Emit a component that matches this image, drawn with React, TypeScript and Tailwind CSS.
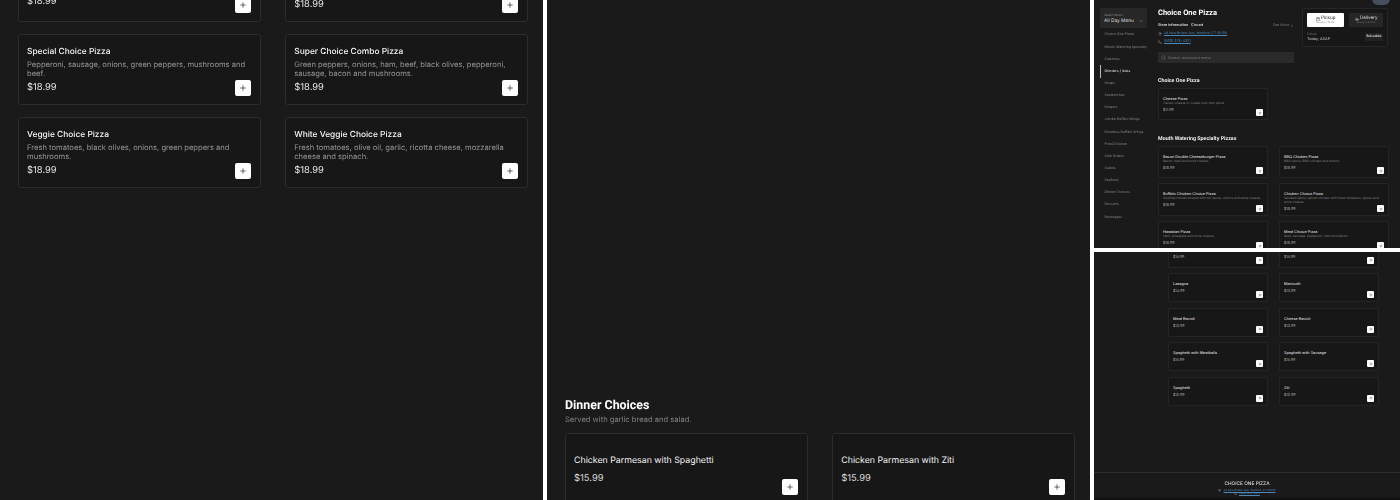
import { Plus, Search, MapPin, Phone, ChevronDown, ShoppingBag, Car } from "lucide-react";

const sans = "font-['Inter','Liberation_Sans',sans-serif]";

function AddBtn({ big }: { big?: boolean }) {
  return (
    <span className={big
      ? "absolute right-[9px] bottom-[8px] flex h-4 w-4 items-center justify-center rounded-[2px] bg-white text-[#222]"
      : "absolute right-[4px] bottom-[3px] flex h-[7px] w-[7px] items-center justify-center rounded-[1px] bg-white text-[#222]"}>
      <Plus size={big ? 8 : 4} strokeWidth={2} />
    </span>
  );
}

function BigCard({ title, desc, price, loose }: { title: string; desc: string; price: string; loose?: boolean }) {
  return (
    <div className="relative h-[71px] rounded-[3px] border border-[#2c2c2c] bg-[#171717] px-2 pt-[11px]">
      <div className="text-[8.4px] leading-[13px] font-medium text-[#f5f5f5]">{title}</div>
      <div className="mt-[1px] text-[7.6px] leading-[9px] text-[#949494]">{desc}</div>
      <div className={`${loose ? "mt-[9.5px]" : "mt-[3.5px]"} text-[9.4px] leading-[11px] text-[#e6e6e6]`}>{price}</div>
      <AddBtn big />
    </div>
  );
}

function DinnerCard({ title, price }: { title: string; price: string }) {
  return (
    <div className="relative h-[80px] rounded-[3px] border border-[#2c2c2c] bg-[#171717] px-2 pt-[20px]">
      <div className="text-[8.8px] leading-[13px] text-[#f2f2f2]">{title}</div>
      <div className="mt-[5px] text-[9.4px] leading-[13px] text-[#d8d8d8]">{price}</div>
      <span className="absolute right-[9px] top-[45px] flex h-4 w-4 items-center justify-center rounded-[2px] bg-white text-[#222]">
        <Plus size={8} strokeWidth={2} />
      </span>
    </div>
  );
}

function MiniCard({ title, desc, price, h }: { title: string; desc?: string; price: string; h: string }) {
  return (
    <div className={`relative rounded-[1px] border border-[#242424] bg-[#171717] px-[4px] pt-[7px] ${h}`}>
      <div className="text-[3.8px] leading-[5px] text-[#ededed]">{title}</div>
      {desc && <div className="text-[3.2px] leading-[4px] text-[#808080]">{desc}</div>}
      <div className="mt-[3px] text-[3.6px] leading-[5px] text-[#bbb]">{price}</div>
      <AddBtn />
    </div>
  );
}

const cats = ["Choice One Pizza", "Mouth Watering Specialty", "Calzones", "Grinders / Subs", "Wraps", "Sandwiches", "Burgers", "Jumbo Buffalo Wings", "Boneless Buffalo Wings", "Fried Chicken", "Side Orders", "Salads", "Seafood", "Dinner Choices", "Desserts", "Beverages"];

function LeftPanel() {
  return (
    <section className="h-full w-[543px] shrink-0 overflow-hidden bg-[#1a1a1a]">
      <div className="-mt-[49px] grid w-[528px] grid-cols-2 gap-x-[24.5px] gap-y-[12px] pl-[18px] blur-[0.3px]">
        <BigCard loose title="Philly Choice Pizza" desc="Steak, onions, green peppers, mushrooms and extra cheese." price="$18.99" />
        <BigCard title="Seafood Choice Pizza" desc="Shrimp, crab meat, garlic, tomatoes and mozzarella cheese with a white sauce." price="$18.99" />
        <BigCard title="Special Choice Pizza" desc="Pepperoni, sausage, onions, green peppers, mushrooms and beef." price="$18.99" />
        <BigCard title="Super Choice Combo Pizza" desc="Green peppers, onions, ham, beef, black olives, pepperoni, sausage, bacon and mushrooms." price="$18.99" />
        <BigCard title="Veggie Choice Pizza" desc="Fresh tomatoes, black olives, onions, green peppers and mushrooms." price="$18.99" />
        <BigCard title="White Veggie Choice Pizza" desc="Fresh tomatoes, olive oil, garlic, ricotta cheese, mozzarella cheese and spinach." price="$18.99" />
      </div>
    </section>
  );
}

function MiddlePanel() {
  return (
    <section className="h-full w-[543px] shrink-0 overflow-hidden bg-[#1a1a1a] px-[18px] pt-[397px]">
      <div className="blur-[0.3px]">
        <h2 className="font-['Roboto',sans-serif] text-[12.4px] leading-[17px] font-bold text-white">Dinner Choices</h2>
        <p className="text-[7.6px] leading-[12px] text-[#808080]">Served with garlic bread and salad.</p>
        <div className="mt-[7px] grid w-[510px] grid-cols-2 gap-x-[24.5px]">
          <DinnerCard title="Chicken Parmesan with Spaghetti" price="$15.99" />
          <DinnerCard title="Chicken Parmesan with Ziti" price="$15.99" />
        </div>
      </div>
    </section>
  );
}

function TopRight() {
  return (
    <section className="h-[248px] shrink-0 overflow-hidden bg-[#1a1a1a]">
      <div className="relative flex h-full blur-[0.45px]">
        <span className="absolute -top-[7px] right-[10px] h-[12px] w-[18px] rounded-full bg-[#46505c]" />
        <aside className="w-[56px] shrink-0 pl-[6px] pt-[8px]">
          <div className="flex h-[20px] w-[47px] flex-col justify-center rounded-[1px] bg-[#272727] px-[4px]">
            <span className="text-[3.2px] leading-[5px] text-[#8a8a8a]">Select Menu</span>
            <span className="flex items-center justify-between text-[4.8px] leading-[6px] text-[#ddd]">All Day Menu <ChevronDown size={4} /></span>
          </div>
          <ul className="mt-[1px]">
            {cats.map((c, i) => (
              <li key={c} className={`flex h-[12.15px] items-center border-l pl-[3.5px] text-[3.5px] ${i === 3 ? "border-[#bbb] text-[#e5e5e5]" : "border-transparent text-[#858585]"}`}>
                <span className="whitespace-nowrap">{c}</span>
              </li>
            ))}
          </ul>
        </aside>
        <div className="ml-[8px] w-[231px] shrink-0 pt-[8px]">
          <div className="w-[136px]">
            <h1 className="font-['Roboto',sans-serif] text-[7.5px] leading-[10px] font-bold text-white">Choice One Pizza</h1>
            <div className="mt-[5px] flex items-center justify-between text-[3.6px] leading-[5px]">
              <span className="font-semibold text-[#ddd]">Store Information <span className="ml-[2px] text-[#ccc]">Closed</span></span>
              <span className="flex items-center gap-[1px] text-[#777]">See More <ChevronDown size={4} className="-rotate-90 text-[#ccc]" /></span>
            </div>
            <div className="mt-[3px] flex items-center gap-[2px] text-[3.4px] leading-[5px]">
              <MapPin size={4} className="text-[#999]" />
              <span className="text-[#4d88b8] underline">24 New Britain Ave, Hartford, CT 06106</span>
            </div>
            <div className="mt-[3px] flex items-center gap-[2px] text-[3.6px] leading-[5px]">
              <Phone size={4} className="text-[#999]" />
              <span className="text-[#4d88b8] underline">(860) 278-4321</span>
            </div>
          </div>
          <div className="mt-[8px] flex h-[11px] w-[136px] items-center gap-[2px] rounded-[1px] bg-[#2a2a2a] px-[3px] text-[3.8px] text-[#777]">
            <Search size={5} /> Search restaurant menu
          </div>
          <h3 className="mt-[14px] font-['Roboto',sans-serif] text-[5.3px] leading-[8px] font-bold text-[#eee]">Choice One Pizza</h3>
          <div className="mt-[3px] w-[110px]">
            <MiniCard title="Cheese Pizza" desc="Classic cheese or create your own pizza" price="$11.99" h="h-[32px]" />
          </div>
          <h3 className="mt-[15px] font-['Roboto',sans-serif] text-[5.3px] leading-[8px] font-bold text-[#eee]">Mouth Watering Specialty Pizzas</h3>
          <div className="mt-[3px] grid w-[231px] grid-cols-2 gap-x-[11px] gap-y-[5px]">
            <MiniCard title="Bacon Double Cheeseburger Pizza" desc="Bacon, beef and extra cheese." price="$18.99" h="h-[32px]" />
            <MiniCard title="BBQ Chicken Pizza" desc="BBQ sauce, BBQ chicken and onions." price="$18.99" h="h-[32px]" />
            <MiniCard title="Buffalo Chicken Choice Pizza" desc="Sizzling chicken tossed with hot sauce, onions and extra cheese." price="$18.99" h="h-[33px]" />
            <MiniCard title="Chicken Choice Pizza" desc="Sautéed lightly spiced chicken with fresh tomatoes, spices and extra cheese." price="$18.99" h="h-[33px]" />
            <MiniCard title="Hawaiian Pizza" desc="Ham, pineapple and extra cheese." price="$18.99" h="h-[32px]" />
            <MiniCard title="Meat Choice Pizza" desc="Beef, sausage, pepperoni, ham and bacon." price="$18.99" h="h-[32px]" />
          </div>
        </div>
        <div className="absolute top-[8px] left-[208px] h-[39px] w-[86px] rounded-[2px] border border-[#262626] bg-[#171717] p-[4px]">
          <div className="flex h-[14px] gap-[5px]">
            <div className="flex w-[39px] flex-col items-center justify-center rounded-[1px] bg-white text-[#222]">
              <span className="flex items-center gap-[1px] text-[4.5px] leading-[5px]"><ShoppingBag size={4} /> Pickup</span>
              <span className="text-[2.5px] leading-[3px] text-[#777]">Ready in 15 min</span>
            </div>
            <div className="flex w-[35px] flex-col items-center justify-center rounded-[1px] bg-[#262626] text-[#ddd]">
              <span className="flex items-center gap-[1px] text-[4.5px] leading-[5px]"><Car size={4} /> Delivery</span>
              <span className="text-[2.5px] leading-[3px] text-[#777]">Ready in 45 min</span>
            </div>
          </div>
          <div className="mt-[5px] flex items-center justify-between">
            <div>
              <div className="text-[3px] leading-[4px] text-[#777]">Pickup</div>
              <div className="text-[3.8px] leading-[5px] text-[#ccc]">Today, ASAP</div>
            </div>
            <span className="flex h-[8px] items-center rounded-[1px] bg-[#222] px-[1.5px] text-[3.4px] font-semibold text-[#e5e5e5]">Schedule</span>
          </div>
        </div>
      </div>
    </section>
  );
}

const lower = [
  ["Chicken Parmesan with Spaghetti", "$15.99"], ["Chicken Parmesan with Ziti", "$15.99"],
  ["Lasagna", "$14.99"], ["Manicotti", "$13.99"],
  ["Meat Ravioli", "$13.99"], ["Cheese Ravioli", "$13.99"],
  ["Spaghetti with Meatballs", "$15.99"], ["Spaghetti with Sausage", "$15.99"],
  ["Spaghetti", "$12.99"], ["Ziti", "$12.99"],
];

function BottomRight() {
  return (
    <section className="min-h-0 flex-1 overflow-hidden bg-[#1a1a1a]">
      <div className="flex h-full flex-col blur-[0.45px]">
        <div className="-mt-[13.5px] ml-[74px] grid w-[211px] grid-cols-2 gap-x-[11px] gap-y-[5.5px]">
          {lower.map(([t, p]) => <MiniCard key={t} title={t} price={p} h="h-[29px]" />)}
        </div>
        <footer className="mt-[66.5px] flex flex-1 flex-col items-center border-t border-[#2c2c2c] pt-[8px]">
          <div className="text-[4.8px] leading-[7px] font-medium text-[#ddd]">CHOICE ONE PIZZA</div>
          <div className="flex items-center gap-[2px] text-[2.8px] leading-[4px]">
            <MapPin size={3} className="text-[#bbb]" />
            <span className="text-[#4d88b8] underline">24 New Britain Ave, Hartford, CT 06106</span>
          </div>
          <div className="flex items-center gap-[2px] text-[2.8px] leading-[3px]">
            <Phone size={3} className="text-[#bbb]" />
            <span className="text-[#4d88b8] underline">(860) 278-4321</span>
          </div>
        </footer>
        <div className="h-[2px] shrink-0 bg-[#101010]" />
      </div>
    </section>
  );
}

export default function App() {
  return (
    <div className={`flex h-[500px] w-[1400px] gap-[4px] overflow-hidden bg-white [text-rendering:geometricPrecision] ${sans}`}>
      <LeftPanel />
      <MiddlePanel />
      <div className="flex h-full w-[306px] shrink-0 flex-col gap-[4px]">
        <TopRight />
        <BottomRight />
      </div>
    </div>
  );
}
